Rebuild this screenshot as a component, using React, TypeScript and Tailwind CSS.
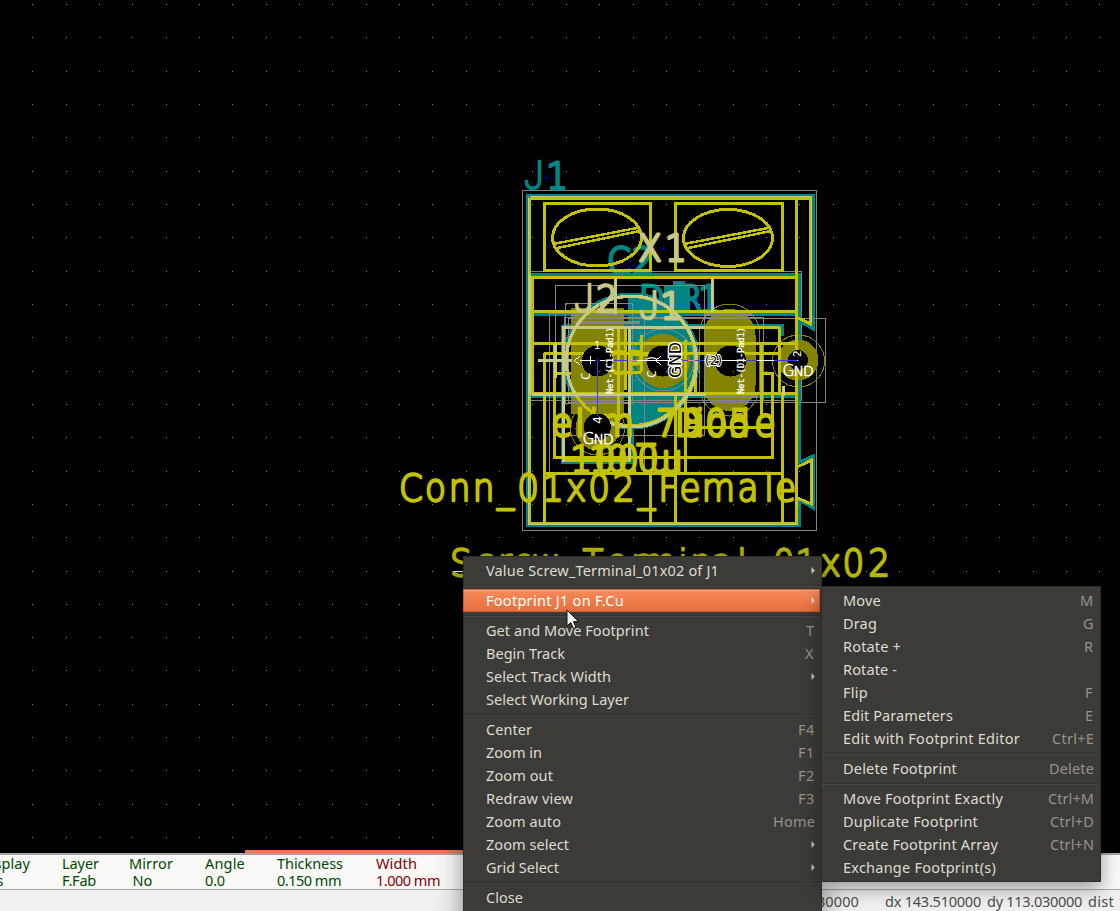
import { useLayoutEffect, useRef, useState } from "react";

const Y = "#c2c200";
const T = "#008484";
const G = "#848484";
const C = "#c8c886";
const P = "#848400";

/** Text whose tracking is adjusted so that it takes a given width. */
function Fit({ text, w, className = "" }: { text: string; w: number; className?: string }) {
  const ref = useRef<HTMLSpanElement>(null);
  const [ls, setLs] = useState(0);
  useLayoutEffect(() => {
    if (!ref.current) return;
    const natural = ref.current.getBoundingClientRect().width - ls * text.length;
    setLs((w - natural) / text.length);
  }, [text, w]);
  return (
    <span ref={ref} className={`whitespace-pre ${className}`} style={{ letterSpacing: `${ls}px` }}>
      {text}
    </span>
  );
}

/** Board lettering: every glyph is centred on its own x coordinate. */
function Label({ s, xs, y, fill, size = 38, sw = 2.3, font = "'DejaVu Sans', sans-serif" }: { s: string; xs: number[]; y: number; fill: string; size?: number; sw?: number; font?: string }) {
  const k = 0.9;
  return (
    <text
      transform={`scale(${k} 1)`}
      x={xs.map((v) => (v / k).toFixed(1)).join(" ")}
      y={y}
      textAnchor="middle"
      fill={fill}
      stroke={fill}
      strokeWidth={sw}
      strokeLinejoin="round"
      fontSize={size}
      fontWeight={200}
      fontFamily={font}
    >
      {s}
    </text>
  );
}

function Box({ a, c, w = 3 }: { a: [number, number, number, number]; c: string; w?: number }) {
  return <rect x={a[0]} y={a[1]} width={a[2] - a[0]} height={a[3] - a[1]} fill="none" stroke={c} strokeWidth={w} />;
}

function Cross({ x, y, c = "#00009c", r = 2.5 }: { x: number; y: number; c?: string; r?: number }) {
  return <path d={`M${x - r} ${y}H${x + r}M${x} ${y - r}V${y + r}`} stroke={c} strokeWidth={1} />;
}

function Board() {
  const dots: string[] = [];
  for (let j = 0; j < 26; j++)
    for (let i = 0; i < 33; i++) dots.push(`M${Math.floor(32.7 + i * 33.35)} ${Math.floor(4.4 + j * 33.33)}h1v1h-1z`);
  const sans = "Roboto, sans-serif";
  return (
    <svg width="1120" height="850" viewBox="0 0 1120 850" className="block" shapeRendering="crispEdges">
      <rect width="1120" height="850" fill="#000" />

      {/* courtyards */}
      <Box a={[522.5, 190.5, 816.5, 530.5]} c={G} w={1} />
      <Box a={[526.5, 271.5, 801.5, 400.5]} c={G} w={1} />

      {/* fabrication layer */}
      <g fill="none" stroke={T} strokeWidth="3">
        <path d="M527.5 195.5H813V329L799.500 321V462L813 456V508L799.500 500V525.500H527.500Z" />
        <path d="M527.500 274.500H799.500V396.500H527.500Z" />
        <path d="M531 314.500H799" />
        <path d="M562.500 325.500H782.500V336M562.500 325V462.500H632.500V325" />
        <circle cx="631" cy="361" r="67" />
      </g>
      <path d="M628 294A67 67 0 0 1 628 428Z" fill={T} />
      <path d="M664 285h9v-4h12v3h5v32h-26z" fill={T} />
      <Label s="J" xs={[534]} y={189} fill={T} font={sans} />
      <Label s="1" xs={[557]} y={189} fill={T} sw={3} />
      <Label s="C2" xs={[619, 643]} y={274} fill={T} sw={3} />
      <Label s="DR1" xs={[652, 691, 709]} y={312} fill={T} sw={3} />

      {/* pads */}
      <rect x="571" y="308" width="53" height="106" fill={P} />
      <circle cx="597.500" cy="428.500" r="22" fill={P} />
      <circle cx="663" cy="361" r="27" fill={P} />
      <path d="M703.500 335a26 26 0 0 1 52 0v50a26 26 0 0 1-52 0z" fill={P} />
      <circle cx="798" cy="360" r="20.500" fill={P} />
      <g fill="none" stroke={P}>
        <path d="M699.500 334a30 30 0 0 1 60 0v52a30 30 0 0 1-60 0z" />
        <circle cx="798.500" cy="361" r="26" />
        <circle cx="597.500" cy="428" r="27" />
      </g>
      <circle cx="663" cy="360" r="31" fill="none" stroke={G} />

      <g fill="none" stroke={G}>
        <path d="M555.500 435.500V285.500H704.500V435.500Z" />
        <path d="M549.500 313.500H644.500V474.500H549.500Z" />
        <path d="M565.500 303.500H632.500V403.500H565.500Z" />
        <path d="M568.500 318.500H825.500V402.500H568.500Z" />
        <path d="M564.500 317.500H763.500V400H564.500Z" />
        <path d="M571 314.500H624M574 322.500H640M571 396.500H624M704 396.500H757M704 314.500H752" strokeWidth="3" />
      </g>

      {/* silkscreen */}
      <g fill="none" stroke={Y} strokeWidth="3">
        <path d="M529.500 198.500H810.500V324L797 317.500M797 467L811.500 460V504L797 498M529.500 198V523.500H796.500V198" />
        <path d="M544.500 203.500H650.500V270.500H544.500ZM675.500 203.500H782.500V270.500H675.500Z" />
        <ellipse cx="597" cy="237.500" rx="44.500" ry="28.500" />
        <ellipse cx="728" cy="238" rx="44.500" ry="28.500" />
        <path d="M553 244L637 228M557 248L640 231M684 244L768 228M688 248L771 231" strokeWidth="2.500" />
        <path d="M532.500 277.500H796.500V393.500H532.500Z" />
        <path d="M531 311.500H797M531 343.500H797M544 353.500H780M544.500 353V523M782.500 395V523M544 473.500H783" />
        <path d="M650.500 473V523M675.500 395V523M685.500 340V474M695.500 353V395M554.500 345V457.500H772.500V373.500H761.500M761.500 345V415M779.500 327V393M564 327.500H780M629.500 327V460M564 460H631" />
        <path d="M618.500 328V420M625 328V390M641 335V372M641 372h-24M632 354h24M688 427H772M553 373h18" />
        <circle cx="631" cy="361" r="64.500" />
      </g>
      <path d="M530 196.500H812M528.500 197V524.500H797M811.500 198V322M812.500 461V503" fill="none" stroke={C} strokeWidth="1.500" />
      <g fill="none" stroke={C} strokeWidth="3">
        <path d="M529.500 275V395M615.500 277V314M712.500 277V312M538 360.500H572M555.500 343V378M563.500 462V327.500H704M629 327.500V460M532 394.500H706M783 386V396" />
        <path d="M577 397A65 65 0 0 1 631 296M631 296A65 65 0 0 1 631 427A65 65 0 0 1 607 422" />
      </g>

      <Label s="Conn_01x02_Female" xs={[411, 435.500, 459.500, 483.500, 505.500, 528, 553, 576, 599, 623.500, 646.500, 668, 690, 718.500, 748, 769, 785.500]} y={501.500} fill={Y} />
      <Label s="Screw_Terminal_01x02" xs={[461, 485, 505, 524, 546, 570, 593, 617, 638, 659, 683, 701, 722, 742, 762, 784, 806, 830.500, 853.500, 879]} y={576} fill="#b9b900" />
      <Label s="elim_7805" xs={[562, 580, 594, 617, 646, 667, 693, 716, 740]} y={436.500} fill={Y} sw={3} />
      <Label s="Diode" xs={[688, 700, 717, 739, 765]} y={436.500} fill={Y} sw={3} />
      <Label s="100u" xs={[581, 605, 628, 660]} y={472} fill={Y} sw={2.600} />
      <Label s="10.0u" xs={[600, 617, 634, 648, 672]} y={472} fill={Y} sw={2.600} />
      <Label s="CP" xs={[617, 635]} y={374} fill={Y} size={32} />
      <Label s="J" xs={[584]} y={312} fill={C} font={sans} />
      <Label s="2" xs={[607]} y={312} fill={C} sw={2.700} />
      <Label s="J" xs={[649]} y={319.500} fill={C} font={sans} sw={2.700} />
      <Label s="1" xs={[671]} y={319.500} fill={C} sw={3} />
      <Label s="X1" xs={[650, 676]} y={261.500} fill={C} sw={3} />

      {/* drill holes */}
      <circle cx="597.500" cy="361" r="15.500" fill="#000" />
      <circle cx="662.500" cy="361" r="15.500" fill="#000" />
      <circle cx="730.500" cy="361" r="15.500" fill="#000" />
      <circle cx="597.500" cy="427" r="13.500" fill="#000" />
      <circle cx="798" cy="360" r="10" fill="#000" />

      {/* ratsnest and net names */}
      <path d="M580 360.500H798" stroke="#fff" />
      <path d="M605 360.500H636M682 360.500H704M746 360.500H757M774 360.500H797M597.500 361V416" stroke="#3c3cff" />
      <path d="M628 360.500H637M688 360.500H695" stroke="#ff8080" />
      <path d="M574 360.500l6-4M574 360.500l6 4M590.500 356v8M655 360.500l6-4M655 360.500l6 4M669 356v8" stroke="#fff" />
      <g fill="#fff" fontFamily="'DejaVu Sans Mono', monospace">
        <text transform="translate(613 394) rotate(-90)" fontSize="9" textLength="67" stroke="#fff" strokeWidth="0.3">Net-(C1-Pad1)</text>
        <text transform="translate(744 394) rotate(-90)" fontSize="9" textLength="67" stroke="#fff" strokeWidth="0.3">Net-(D1-Pad1)</text>
        <text x="594" y="349" fontSize="10">1</text>
        <text transform="translate(590 376) rotate(-90)" fontSize="13" textAnchor="middle">C</text>
        <text transform="translate(602 424) rotate(-90)" fontSize="13">4</text>
        <text transform="translate(801 357) rotate(-90)" fontSize="11">2</text>
        <text transform="translate(656 378) rotate(-90)" fontSize="13">C  )</text>
      </g>
      <g fill="#fff" stroke="#fff" strokeWidth="0.6" fontFamily="'DejaVu Sans', sans-serif" fontWeight={200} fontSize="15.500">
        <text x="582.500" y="444">G</text>
        <text x="593.500" y="444" fontSize="14">N</text>
        <text x="603" y="444" fontSize="14">D</text>
        <text x="782.500" y="376">G</text>
        <text x="793.500" y="376" fontSize="14">N</text>
        <text x="803" y="376" fontSize="14">D</text>
      </g>
      <text transform="translate(681 378) rotate(-90)" fontSize="16" textLength="36" fill="#000" stroke="#fff" strokeWidth="2.600" paintOrder="stroke" fontFamily="'DejaVu Sans', sans-serif">
        GND
      </text>
      <text x="705" y="365" fontSize="12" fill="#000" stroke="#fff" strokeWidth="2" paintOrder="stroke" fontFamily="'DejaVu Sans', sans-serif">
        (2)
      </text>

      <Cross x={546.500} y={177.500} />
      <Cross x={663.500} y={248.500} />
      <Cross x={629.500} y={260.500} />
      <Cross x={697.500} y={299.500} />
      <Cross x={597.500} y={488.500} />
      <Cross x={597.500} y={360.500} c="#1414d0" />
      <path d="M454 571.500H464" stroke="#fff" />
      <path d={dots.join("")} fill="#848484" />
    </svg>
  );
}

type Item = { t: string; w: number; k?: string; kw?: number; sub?: boolean; hot?: boolean } | null;

const MAIN: Item[] = [
  { t: "Value Screw_Terminal_01x02 of J1", w: 233, sub: true },
  null,
  { t: "Footprint J1 on F.Cu", w: 138, sub: true, hot: true },
  null,
  { t: "Get and Move Footprint", w: 163, k: "T", kw: 9 },
  { t: "Begin Track", w: 79, k: "X", kw: 10 },
  { t: "Select Track Width", w: 125, sub: true },
  { t: "Select Working Layer", w: 143 },
  null,
  { t: "Center", w: 46, k: "F4", kw: 17 },
  { t: "Zoom in", w: 56, k: "F1", kw: 17 },
  { t: "Zoom out", w: 67, k: "F2", kw: 17 },
  { t: "Redraw view", w: 87, k: "F3", kw: 17 },
  { t: "Zoom auto", w: 75, k: "Home", kw: 42 },
  { t: "Zoom select", w: 83, sub: true },
  { t: "Grid Select", w: 73, sub: true },
  null,
  { t: "Close", w: 37 },
];

const SUB: Item[] = [
  { t: "Move", w: 38, k: "M", kw: 14 },
  { t: "Drag", w: 34, k: "G", kw: 11 },
  { t: "Rotate +", w: 58, k: "R", kw: 10 },
  { t: "Rotate -", w: 54 },
  { t: "Flip", w: 25, k: "F", kw: 9 },
  { t: "Edit Parameters", w: 110, k: "E", kw: 9 },
  { t: "Edit with Footprint Editor", w: 177, k: "Ctrl+E", kw: 42 },
  null,
  { t: "Delete Footprint", w: 114, k: "Delete", kw: 45 },
  null,
  { t: "Move Footprint Exactly", w: 160, k: "Ctrl+M", kw: 46 },
  { t: "Duplicate Footprint", w: 135, k: "Ctrl+D", kw: 44 },
  { t: "Create Footprint Array", w: 155, k: "Ctrl+N", kw: 44 },
  { t: "Exchange Footprint(s)", w: 153 },
];

function Rows({ items, pad }: { items: Item[]; pad: string }) {
  return (
    <>
      {items.map((it, i) =>
        it === null ? (
          <div key={i} className="flex h-[7px] flex-col justify-center">
            <div className="h-px bg-[#33322e]" />
            <div className="h-px bg-[#464540]" />
          </div>
        ) : (
          <div
            key={i}
            className={`flex h-[23px] items-center justify-between leading-[23px] ${
              it.hot
                ? "mr-px -ml-px border border-[#cc5f33] bg-gradient-to-b from-[#f68a5b] to-[#e96f3d] pr-[4px] pl-[22px] text-white shadow-[inset_0_1px_0_#fba47c]"
                : `border border-transparent text-[#dfdbd2] ${pad}`
            }`}
          >
            <Fit text={it.t} w={it.w} />
            {it.k && <Fit text={it.k} w={it.kw ?? 10} className="text-[#96938b]" />}
            {it.sub && (
              <svg width="4" height="7" viewBox="0 0 4 7">
                <path d="M0.500 0L3.800 3.500L0.500 7Z" fill={it.hot ? "#f3d9cc" : "#c9c5bc"} />
              </svg>
            )}
          </div>
        )
      )}
    </>
  );
}

const INFO: [string, number, string, number, string][] = [
  ["Layer", 37, "F.Fab", 34, "w-[67px] text-[#004800]"],
  ["Mirror", 44, " No", 23, "w-[76px] text-[#004800]"],
  ["Angle", 40, "0.0", 20, "w-[72px] text-[#004800]"],
  ["Thickness", 66, "0.150 mm", 64, "w-[99px] text-[#004800]"],
  ["Width", 41, "1.000 mm", 64, "w-[80px] text-[#840000]"],
];

export default function App() {
  return (
    <div className="relative flex h-[911px] w-[1120px] flex-col overflow-hidden bg-black font-['Noto_Sans',sans-serif] text-[14.500px]">
      <Board />
      <div className="h-[3px] bg-black pl-[245px]">
        <div className="h-[3px] w-[577px] bg-[#f07746]" />
      </div>
      <div className="h-[2px] bg-[#a4a4a2]" />
      <div className="flex h-[34px] bg-[#f9f9f8] leading-[17px]">
        <div className="flex w-[62px] flex-col items-start text-[#004800]">
          <Fit text="Display" w={50} className="-ml-5" />
          <Fit text="Items" w={37} className="-ml-[34px]" />
        </div>
        {INFO.map(([a, aw, b, bw, cls]) => (
          <div key={a} className={`flex flex-col items-start ${cls}`}>
            <Fit text={a} w={aw} />
            <Fit text={b} w={bw} />
          </div>
        ))}
      </div>
      <div className="h-px bg-[#a9aba8]" />
      <div className="flex h-[21px] items-center bg-[#f1f0ef] pl-[767px] leading-[21px] text-[#4c4c4c]">
        <div className="w-[118px] flex-none pt-px">
          <Fit text="Y 113.030000" w={92} />
        </div>
        <div className="w-[102px] flex-none pt-px">
          <Fit text="dx 143.510000" w={96} />
        </div>
        <div className="w-[101px] flex-none pt-px">
          <Fit text="dy 113.030000" w={95} />
        </div>
        <div className="flex-none pt-px">
          <Fit text="dist 182.656" w={86} />
        </div>
      </div>

      <div className="absolute top-[556px] left-[463px] h-[380px] w-[359px] border border-[#2f2e2b] bg-[#3c3b37] pt-[2px] shadow-[0_6px_24px_rgba(0,0,0,0.45)]">
        <Rows items={MAIN} pad="pr-[5px] pl-[21px]" />
      </div>
      <div className="absolute top-[586px] left-[821px] h-[296px] w-[280px] border border-[#2f2e2b] bg-[#3c3b37] pt-[2px] shadow-[0_6px_18px_rgba(0,0,0,0.4)]">
        <Rows items={SUB} pad="pr-[5px] pl-[20px]" />
      </div>
      <svg width="14" height="21" viewBox="0 0 14 21" className="absolute top-[609px] left-[566px]">
        <path d="M1 1V17L4.800 13.500L7.500 19.500L10 18.400L7.400 12.600H12.500Z" fill="#fff" stroke="#111" strokeWidth="1" />
      </svg>
    </div>
  );
}
